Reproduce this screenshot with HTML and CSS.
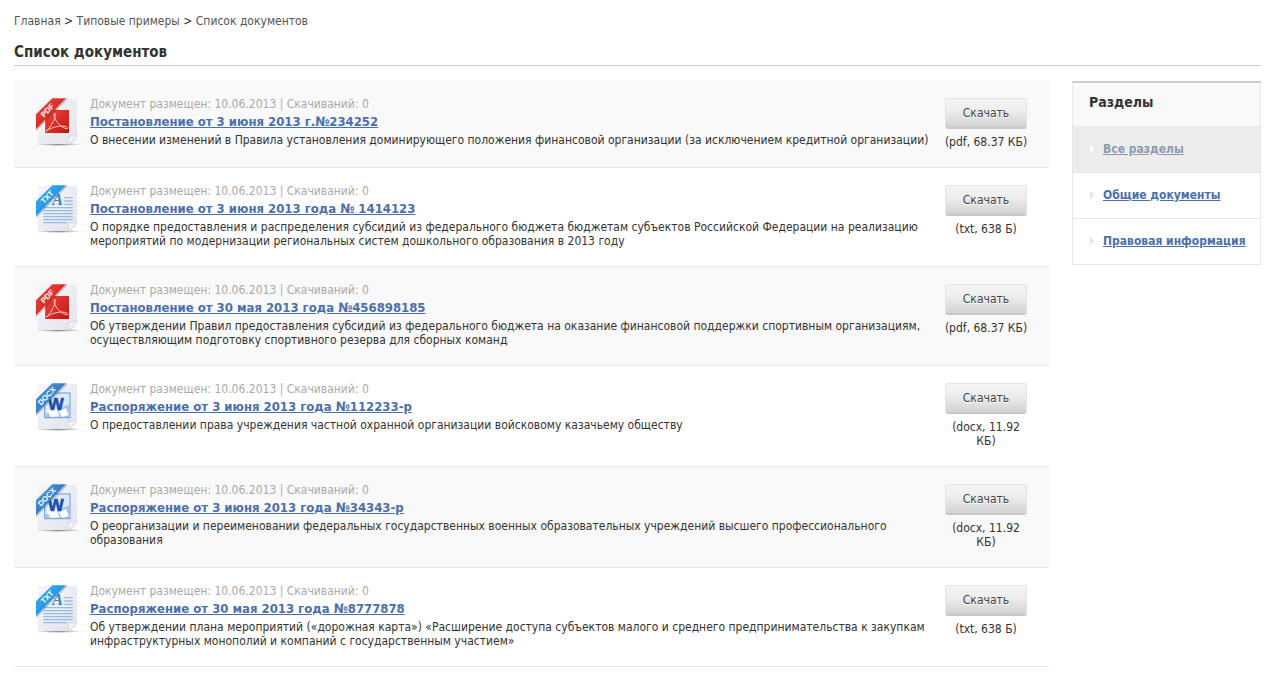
FILE: index.html
```
<!DOCTYPE html>
<html lang="ru">
<head>
  <meta charset="UTF-8">
  <meta name="viewport" content="width=device-width, initial-scale=1.0">
  <title>Список документов</title>
  <link rel="stylesheet" href="styles.css">
</head>
<body>

<!-- File type icons -->
<svg class="sprite" aria-hidden="true">
  <defs>
    <linearGradient id="paper" x1="0" y1="0" x2="1" y2="1">
      <stop offset="0" stop-color="#f6f6fa"/>
      <stop offset="1" stop-color="#e2e2ec"/>
    </linearGradient>
    <linearGradient id="red" x1="0" y1="0" x2="1" y2="1">
      <stop offset="0" stop-color="#ee4a40"/>
      <stop offset="1" stop-color="#c3120f"/>
    </linearGradient>
    <linearGradient id="azure" x1="0" y1="0" x2="1" y2="1">
      <stop offset="0" stop-color="#3fb4f3"/>
      <stop offset="1" stop-color="#0b7bd0"/>
    </linearGradient>
    <linearGradient id="blue" x1="0" y1="0" x2="1" y2="1">
      <stop offset="0" stop-color="#4f9be0"/>
      <stop offset="1" stop-color="#1c62b4"/>
    </linearGradient>
    <linearGradient id="fold" x1="0" y1="0" x2="1" y2="1">
      <stop offset="0.1" stop-color="#9c9ca4"/>
      <stop offset="0.35" stop-color="#ffffff"/>
      <stop offset="0.6" stop-color="#e6e6ea"/>
    </linearGradient>
    <radialGradient id="shade">
      <stop offset="0" stop-color="#555" stop-opacity="0.7"/>
      <stop offset="1" stop-color="#555" stop-opacity="0"/>
    </radialGradient>
    <g id="sheet">
      <ellipse cx="115" cy="175" rx="70" ry="5" fill="url(#shade)"/>
      <path d="M54 41 Q54 38 57 38 H166 Q171 38 171 42 V150 L148 174 H57 Q54 174 54 171 Z" fill="url(#paper)"/>
      <path d="M147 149 Q158 155 172 147 Q166 164 148 174 H138 Q150 165 147 149 Z" fill="url(#fold)" stroke="#c4c4cc" stroke-width="1"/>
    </g>
    <path id="ribbon" d="M48 85 L97 37 H138 L48 130 Z"/>
  </defs>

  <symbol id="icon-pdf" viewBox="42 36 144 144">
    <use href="#sheet"/>
    <rect x="74" y="70" width="75" height="73" fill="url(#red)" stroke="#fff" stroke-width="3"/>
    <path d="M78 136 C90 126 104 104 106 86 C106 79 101 79 102 86 C103 101 118 122 138 128 C146 130 145 122 136 121 C118 118 98 123 82 133 Z" fill="none" stroke="#f3c9c4" stroke-width="3"/>
    <path d="M48 133 L141 38" stroke="#000" stroke-opacity="0.2" stroke-width="4"/>
    <use href="#ribbon" fill="url(#red)"/>
    <text class="icon-label" transform="translate(72 95) rotate(-46)">PDF</text>
  </symbol>

  <symbol id="icon-txt" viewBox="42 36 144 144">
    <use href="#sheet"/>
    <path d="M133 74 H158 M133 84 H158 M133 94 H158 M70 104 H158 M70 113 H158 M70 122 H158 M70 131 H158 M70 140 H158 M70 149 H140" stroke="#94bde0" stroke-width="4"/>
    <text class="icon-letter" x="97" y="96">A</text>
    <path d="M48 133 L141 38" stroke="#000" stroke-opacity="0.2" stroke-width="4"/>
    <use href="#ribbon" fill="url(#azure)"/>
    <text class="icon-label" transform="translate(72 93) rotate(-46)">TXT</text>
  </symbol>

  <symbol id="icon-docx" viewBox="42 36 144 144">
    <use href="#sheet"/>
    <rect x="74" y="66" width="76" height="74" fill="#dce9f8" stroke="#6a98d2" stroke-width="3"/>
    <path d="M76 128 L148 100 V138 H76 Z" fill="#a8c6ea"/>
    <path d="M80 118 L110 112 L118 136 L92 138 Z M116 120 L138 112 L146 132 L126 138 Z" fill="#fff"/>
    <text class="icon-word" x="84" y="118">W</text>
    <path d="M48 133 L141 38" stroke="#000" stroke-opacity="0.2" stroke-width="4"/>
    <use href="#ribbon" fill="url(#blue)"/>
    <text class="icon-label" transform="translate(63 104) rotate(-46)">DOCX</text>
  </symbol>
</svg>

<nav class="breadcrumbs">
  <a href="#">Главная</a> &gt; <a href="#">Типовые примеры</a> &gt; <span>Список документов</span>
</nav>

<h1>Список документов</h1>

<div class="layout">
  <main class="documents">
    <article class="document">
      <svg class="icon"><use href="#icon-pdf"/></svg>
      <div class="info">
        <div class="meta">Документ размещен: 10.06.2013 | Скачиваний: 0</div>
        <a class="title" href="#">Постановление от 3 июня 2013 г.№234252</a>
        <p>О внесении изменений в Правила установления доминирующего положения финансовой организации (за исключением кредитной организации)</p>
      </div>
      <div class="download">
        <button type="button">Скачать</button>
        <span>(pdf, 68.37 КБ)</span>
      </div>
    </article>

    <article class="document">
      <svg class="icon"><use href="#icon-txt"/></svg>
      <div class="info">
        <div class="meta">Документ размещен: 10.06.2013 | Скачиваний: 0</div>
        <a class="title" href="#">Постановление от 3 июня 2013 года № 1414123</a>
        <p>О порядке предоставления и распределения субсидий из федерального бюджета бюджетам субъектов Российской Федерации на реализацию мероприятий по модернизации региональных систем дошкольного образования в 2013 году</p>
      </div>
      <div class="download">
        <button type="button">Скачать</button>
        <span>(txt, 638 Б)</span>
      </div>
    </article>

    <article class="document">
      <svg class="icon"><use href="#icon-pdf"/></svg>
      <div class="info">
        <div class="meta">Документ размещен: 10.06.2013 | Скачиваний: 0</div>
        <a class="title" href="#">Постановление от 30 мая 2013 года №456898185</a>
        <p>Об утверждении Правил предоставления субсидий из федерального бюджета на оказание финансовой поддержки спортивным организациям, осуществляющим подготовку спортивного резерва для сборных команд</p>
      </div>
      <div class="download">
        <button type="button">Скачать</button>
        <span>(pdf, 68.37 КБ)</span>
      </div>
    </article>

    <article class="document">
      <svg class="icon"><use href="#icon-docx"/></svg>
      <div class="info">
        <div class="meta">Документ размещен: 10.06.2013 | Скачиваний: 0</div>
        <a class="title" href="#">Распоряжение от 3 июня 2013 года №112233-р</a>
        <p>О предоставлении права учреждения частной охранной организации войсковому казачьему обществу</p>
      </div>
      <div class="download">
        <button type="button">Скачать</button>
        <span>(docx, 11.92 КБ)</span>
      </div>
    </article>

    <article class="document">
      <svg class="icon"><use href="#icon-docx"/></svg>
      <div class="info">
        <div class="meta">Документ размещен: 10.06.2013 | Скачиваний: 0</div>
        <a class="title" href="#">Распоряжение от 3 июня 2013 года №34343-р</a>
        <p>О реорганизации и переименовании федеральных государственных военных образовательных учреждений высшего профессионального образования</p>
      </div>
      <div class="download">
        <button type="button">Скачать</button>
        <span>(docx, 11.92 КБ)</span>
      </div>
    </article>

    <article class="document">
      <svg class="icon"><use href="#icon-txt"/></svg>
      <div class="info">
        <div class="meta">Документ размещен: 10.06.2013 | Скачиваний: 0</div>
        <a class="title" href="#">Распоряжение от 30 мая 2013 года №8777878</a>
        <p>Об утверждении плана мероприятий («дорожная карта») «Расширение доступа субъектов малого и среднего предпринимательства к закупкам инфраструктурных монополий и компаний с государственным участием»</p>
      </div>
      <div class="download">
        <button type="button">Скачать</button>
        <span>(txt, 638 Б)</span>
      </div>
    </article>
  </main>

  <aside class="sections">
    <h2>Разделы</h2>
    <ul>
      <li class="active"><a href="#">Все разделы</a></li>
      <li><a href="#">Общие документы</a></li>
      <li><a href="#">Правовая информация</a></li>
    </ul>
  </aside>
</div>

</body>
</html>
```
FILE: styles.css
```
body {
  margin: 0;
  padding: 14px 11px 20px 14px;
  font-family: Tahoma, "DejaVu Sans Condensed", "Noto Sans", sans-serif;
  font-size: 12px;
  line-height: 14px;
  color: #333;
  background: #fff;
}

.sprite {
  position: absolute;
  width: 0;
  height: 0;
}

.icon-label {
  font: bold 23px "Liberation Sans", sans-serif;
  fill: #fff;
}

.icon-letter {
  font: italic bold 48px "Liberation Serif", serif;
  fill: #3a86c8;
}

.icon-word {
  font: bold 50px "Liberation Sans", sans-serif;
  fill: #1b4fa8;
  stroke: #1b4fa8;
  stroke-width: 2px;
}

/* Header */
.breadcrumbs a,
.breadcrumbs span {
  color: #555;
  text-decoration: none;
}

h1 {
  margin: 14px 0 15px;
  padding-bottom: 2px;
  border-bottom: 1px solid #ccc;
  font-size: 15px;
  line-height: 21px;
}

.layout {
  display: flex;
  align-items: flex-start;
  gap: 23px;
}

/* Document list */
.documents {
  flex: 1;
  min-width: 0;
}

.document {
  display: flex;
  padding: 17px 18px 18px 20px;
  border-bottom: 1px solid #e8e8e8;
}

.document:nth-child(odd) {
  background: #f9f9f9;
}

.icon {
  flex: none;
  width: 48px;
  height: 48px;
  margin-right: 8px;
}

.info {
  flex: 1;
  min-width: 0;
  margin-right: 10px;
}

.meta {
  line-height: 12px;
  color: #aaa;
}

.title {
  display: block;
  font-size: 13px;
  font-weight: bold;
  line-height: 23px;
  color: #4a6fae;
}

.info p {
  margin: 0;
}

.download {
  flex: none;
  width: 90px;
  text-align: center;
}

.download button {
  display: block;
  width: 82px;
  height: 31px;
  margin: 0 auto 6px;
  padding: 0;
  border: 1px solid #e4e4e4;
  border-bottom: 2px solid #c8c8c8;
  border-radius: 3px;
  background: linear-gradient(#f4f4f4, #eee 40%, #d2d2d2);
  font: inherit;
  color: #444;
  text-shadow: 0 1px 0 #fff;
  cursor: pointer;
}

/* Sidebar */
.sections {
  flex: none;
  box-sizing: border-box;
  width: 189px;
  border: 1px solid #e8e8e8;
  border-top: 2px solid #ccc;
}

.sections h2 {
  margin: 0;
  padding: 10px 16px 14px;
  background: #f9f9f9;
  font-size: 14px;
  line-height: 19px;
}

.sections ul {
  margin: 0;
  padding: 0;
  list-style: none;
}

.sections li {
  display: flex;
  align-items: center;
  gap: 9px;
  height: 43px;
  padding: 0 0 2px 17px;
  border-top: 1px solid #e8e8e8;
}

.sections li::before {
  content: "";
  border: 4px solid transparent;
  border-left-color: #e4e4e4;
  border-right: 0;
}

.sections a {
  font-weight: bold;
  color: #4a6fae;
  white-space: nowrap;
}

.sections .active {
  background: #ececec;
}

.sections .active::before {
  border-left-color: #fff;
}

.sections .active a {
  color: #8c9aac;
}
```
